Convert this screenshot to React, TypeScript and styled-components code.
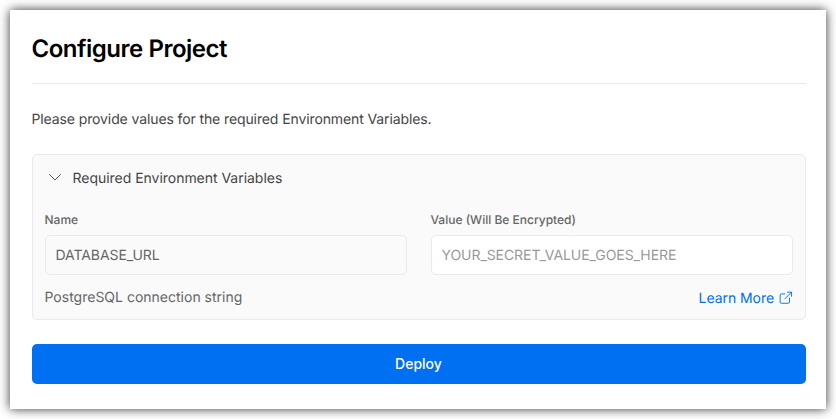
import React from "react";
import styled, { createGlobalStyle } from "styled-components";

const GlobalStyle = createGlobalStyle`
  *, *::before, *::after { box-sizing: border-box; }
  body { margin: 0; background: #fff; font-family: Inter, sans-serif; font-weight: 380; color: #000; text-rendering: geometricPrecision; }
`;

const Page = styled.main`
  height: 419px;
  padding: 10px;
  overflow: hidden;
`;

const Card = styled.section`
  width: 816px;
  height: 399px;
  padding: 21px 20px 0 22px;
  background: #fff;
  box-shadow: 0 0 10px rgba(0, 0, 0, 0.8);
`;

const Title = styled.h1`
  margin: 0;
  height: 53px;
  font-size: 24px;
  line-height: 36px;
  font-weight: 600;
  letter-spacing: -0.48px;
  text-indent: -0.5px;
  border-bottom: 1px solid #eaeaea;
`;

const Intro = styled.p`
  margin: 24px 0 0;
  font-size: 14px;
  line-height: 24px;
  letter-spacing: -0.11px;
  text-indent: -0.5px;
  color: #444;
`;

const Panel = styled.div`
  margin-top: 22px;
  height: 166px;
  padding: 0 12px;
  border: 1px solid #eaeaea;
  border-radius: 5px;
  background: #fafafa;
`;

const PanelHeader = styled.div`
  display: flex;
  align-items: center;
  gap: 10.5px;
  height: 47px;
  padding-left: 3px;
  font-size: 14px;
  letter-spacing: -0.03px;
  color: #444;
`;

const Chevron = styled.svg`
  flex: none;
  margin-bottom: 4px;
`;

const Fields = styled.div`
  display: grid;
  grid-template-columns: 1fr 1fr;
  gap: 24px;
  padding-top: 9px;
`;

const Label = styled.label`
  display: block;
  height: 24px;
  font-size: 12px;
  line-height: 18px;
  font-weight: 500;
  text-indent: -0.5px;
  color: #666;
`;

const Input = styled.div<{ $muted?: boolean }>`
  height: 40px;
  padding: 1px 9.5px 0;
  border: 1px solid #eaeaea;
  border-radius: 5px;
  background: ${(p) => (p.$muted ? "#fafafa" : "#fff")};
  color: ${(p) => (p.$muted ? "#666" : "#999")};
  font-size: 14px;
  line-height: 38px;
  letter-spacing: -0.07px;
`;

const PanelFooter = styled.div`
  display: flex;
  justify-content: space-between;
  padding-top: 12px;
  font-size: 14px;
  line-height: 22px;
  text-indent: -0.5px;
  color: #666;
`;

const Link = styled.a`
  display: flex;
  align-items: center;
  gap: 5px;
  padding-top: 1px;
  letter-spacing: -0.06px;
  color: #0070f3;
`;

const ExternalIcon = styled.svg`
  flex: none;
  margin-bottom: 3px;
`;

const Button = styled.button`
  display: block;
  width: 100%;
  height: 40px;
  margin-top: 24px;
  padding: 0 1px 2px 0;
  border: 0;
  border-radius: 5px;
  background: #0070f3;
  color: #fff;
  font: 480 14px Inter, sans-serif;
`;

export default function App() {
  return (
    <Page>
      <GlobalStyle />
      <Card>
        <Title>Configure Project</Title>
        <Intro>Please provide values for the required Environment Variables.</Intro>
        <Panel>
          <PanelHeader>
            <Chevron width="14" height="14" viewBox="0 0 14 14" fill="none" stroke="#555" strokeLinecap="round" strokeLinejoin="round">
              <path d="M1.5 4.500 7 10 12.500 4.500" />
            </Chevron>
            Required Environment Variables
          </PanelHeader>
          <Fields>
            <div>
              <Label>Name</Label>
              <Input $muted>DATABASE_URL</Input>
            </div>
            <div>
              <Label>Value (Will Be Encrypted)</Label>
              <Input>YOUR_SECRET_VALUE_GOES_HERE</Input>
            </div>
          </Fields>
          <PanelFooter>
            <span>PostgreSQL connection string</span>
            <Link>
              Learn More
              <ExternalIcon width="14" height="14" viewBox="0 0 24 24" fill="none" stroke="currentColor" strokeWidth="1.6" strokeLinecap="round" strokeLinejoin="round">
                <path d="M18 12v7a2 2 0 01-2 2H4a2 2 0 01-2-2V7a2 2 0 012-2h6M14.500 2H21.500v7M10 13.500 21.500 2" />
              </ExternalIcon>
            </Link>
          </PanelFooter>
        </Panel>
        <Button>Deploy</Button>
      </Card>
    </Page>
  );
}
